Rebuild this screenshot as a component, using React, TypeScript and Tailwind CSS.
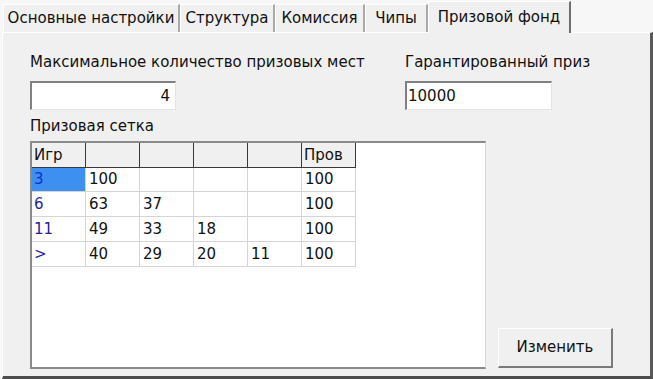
/**
 * Prize fund settings tab
 */

const tabs = [
  { label: "Основные настройки", w: "w-[177px]" },
  { label: "Структура", w: "w-[95px]" },
  { label: "Комиссия", w: "w-[90px]" },
  { label: "Чипы", w: "w-[63px]" },
];

const rows = [
  { key: "3", cells: ["100", "", "", "", "100"], h: "h-[24px]" },
  { key: "6", cells: ["63", "37", "", "", "100"], h: "h-[25px]" },
  { key: "11", cells: ["49", "33", "18", "", "100"], h: "h-[25px]" },
  { key: ">", cells: ["40", "29", "20", "11", "100"], h: "h-[25px]" },
];

function Tab({ label, w }: { label: string; w: string }) {
  return (
    <div
      className={`${w} h-[28px] flex items-center justify-center bg-[#f0f0f0] border-t border-l border-t-white border-l-white border-r-2 border-r-[#a9a9a9]`}
    >
      {label}
    </div>
  );
}

function PrizeGrid() {
  return (
    <div className="w-[456px] h-[228px] bg-white border-t-2 border-l-2 border-t-[#8a8a8a] border-l-[#8a8a8a] border-r border-b-2 border-r-[#d8d8d8] border-b-[#8a8a8a]">
      {/* Header */}
      <div className="flex h-[25px]">
        {["Игр", "", "", "", "", "Пров"].map((h, i) => (
          <div
            key={i}
            className="w-[54px] h-full bg-[#f0f0f0] border-r border-b border-[#3a3a3a] pl-[2px] flex items-center"
          >
            {h}
          </div>
        ))}
      </div>
      {rows.map((r, ri) => (
        <div key={r.key} className={`flex ${r.h}`}>
          <div
            className={`w-[54px] h-full border-r border-b border-[#d4d4d4] pl-[2px] flex items-center ${
              ri === 0 ? "bg-[#3d8ff0] text-[#1030c8]" : "text-[#24249c]"
            }`}
          >
            {r.key}
          </div>
          {r.cells.map((c, ci) => (
            <div
              key={ci}
              className="w-[54px] h-full border-r border-b border-[#d4d4d4] pl-[3px] flex items-center"
            >
              {c}
            </div>
          ))}
        </div>
      ))}
    </div>
  );
}

export default function App() {
  return (
    <div className="w-[653px] h-[379px] bg-[#f7f7f7] flex flex-col font-['DejaVu_Sans',sans-serif] text-[15px] text-[#111] overflow-hidden">
      {/* Tab strip */}
      <div className="h-[32px] flex items-end pl-[3px]">
        {tabs.map((t) => (
          <Tab key={t.label} label={t.label} w={t.w} />
        ))}
        <div className="w-[143px] h-[32px] flex items-center justify-center bg-[#f0f0f0] border-t border-l border-t-white border-l-white border-r-2 border-r-[#6e6e6e] -mb-px relative z-10">
          Призовой фонд
        </div>
      </div>

      {/* Panel */}
      <div className="flex-1 ml-[2px] bg-[#f0f0f0] border-t border-l border-t-white border-l-white border-r-[3px] border-r-[#5a5a5a] border-b-[3px] border-b-[#4c4c4c] pl-[27px] pt-[19px] flex flex-col">
        <div className="flex">
          <div className="w-[375px] leading-[20px]">Максимальное количество призовых мест</div>
          <div className="leading-[20px]">Гарантированный приз</div>
        </div>

        <div className="flex mt-[9px]">
          <div className="w-[375px]">
            <div className="w-[146px] h-[29px] bg-white border-t-2 border-l-2 border-t-[#808080] border-l-[#808080] border-r border-b border-r-[#e4e4e4] border-b-[#e4e4e4] flex items-center justify-end pr-[5px]">
              4
            </div>
          </div>
          <div className="w-[147px] h-[29px] bg-white border-t-2 border-l-2 border-t-[#808080] border-l-[#808080] border-r border-b border-r-[#e4e4e4] border-b-[#e4e4e4] flex items-center pl-[1px]">
            10000
          </div>
        </div>

        <div className="mt-[6px] leading-[20px]">Призовая сетка</div>

        <div className="mt-[5px] flex items-end gap-[12px]">
          <PrizeGrid />
          <button
            type="button"
            className="w-[115px] h-[40px] mb-px bg-[#f0f0f0] border-t border-l border-t-white border-l-white border-r-2 border-b-2 border-r-[#7a7a7a] border-b-[#7a7a7a] flex items-center justify-center"
          >
            Изменить
          </button>
        </div>
      </div>
    </div>
  );
}
